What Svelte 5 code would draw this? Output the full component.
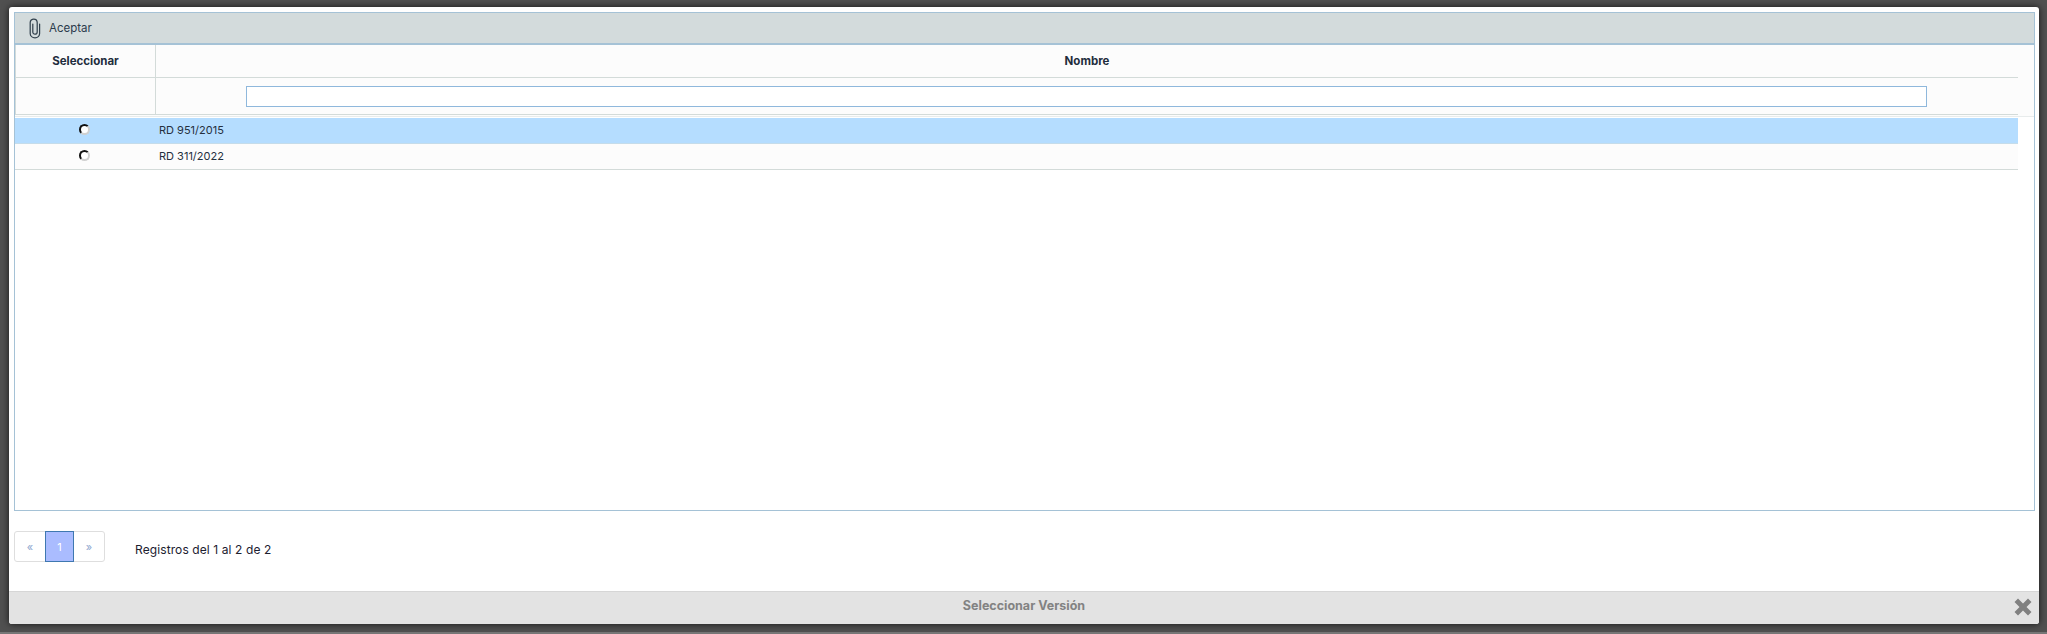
<script>
  const rows = [
    { name: 'RD 951/2015', selected: true },
    { name: 'RD 311/2022', selected: false }
  ];
</script>

<div class="screen">
  <div class="dialog">
    <div class="content">
      <div class="toolbar">
        <svg class="clip" width="12" height="21" viewBox="0 0 12 21" fill="none" stroke="#33424e" stroke-width="1.25" stroke-linecap="round">
          <path d="M10.6 6V15.5C10.6 18 8.6 19.8 6 19.8C3.4 19.8 1.2 18 1.2 15.5V4.6C1.2 2.5 2.8 1 4.8 1C6.8 1 8.2 2.5 8.2 4.6V14C8.2 15.3 7.2 16.2 6 16.2C4.8 16.2 3.8 15.3 3.8 14V6"/>
        </svg>
        <span>Aceptar</span>
      </div>
      <div class="grid">
        <div class="head">
          <div class="hrow titles">
            <div class="c1">Seleccionar</div>
            <div class="c2">Nombre</div>
          </div>
          <div class="hrow filters">
            <div class="c1"></div>
            <div class="c2"><input type="text" aria-label="Nombre" /></div>
          </div>
        </div>
        <div class="body">
          {#each rows as row}
            <div class="row" class:selected={row.selected}>
              <div class="c1"><span class="radio"></span></div>
              <div class="c2">{row.name}</div>
            </div>
          {/each}
        </div>
      </div>
      <div class="pager-line">
        <div class="pager">
          <span class="pg">«</span>
          <span class="pg active">1</span>
          <span class="pg">»</span>
        </div>
        <span class="info">Registros del 1 al 2 de 2</span>
      </div>
    </div>
    <div class="footer">
      <span>Seleccionar Versión</span>
      <svg class="close" width="18" height="18" viewBox="0 0 18 18" aria-hidden="true">
        <path d="M4 .5L9 5.5L14 .5L17.5 4L12.5 9L17.5 14L14 17.5L9 12.5L4 17.5L.5 14L5.5 9L.5 4Z" fill="#808080"/>
      </svg>
    </div>
  </div>
</div>

<style>
  :global(body) {
    margin: 0;
    background: #4a4a4a;
  }
  .screen {
    box-sizing: border-box;
    width: 2047px;
    height: 634px;
    padding: 7px 8px 10px 9px;
    background: #505050;
    border-bottom: 2px solid #767676;
    font-family: Inter, "Open Sans", sans-serif;
    color: #1b2a3a;
    overflow: hidden;
  }
  .dialog {
    height: 617px;
    background: #fff;
    border-radius: 3px;
    display: flex;
    flex-direction: column;
    overflow: hidden;
    box-shadow: 0 0 7px rgba(0, 0, 0, 0.75);
  }
  .content {
    flex: 1;
    padding: 5px 4px 0 5px;
    min-height: 0;
  }
  .toolbar {
    box-sizing: border-box;
    height: 33px;
    display: flex;
    align-items: center;
    gap: 8px;
    padding-left: 14px;
    background: #d3dbdc;
    border: 1px solid #a5c2d6;
    border-bottom-width: 2px;
    font-size: 11.5px;
    color: #2c3c4c;
  }
  .grid {
    box-sizing: border-box;
    height: 466px;
    border: 1px solid #a5c2d6;
    border-top: 0;
  }
  .head {
    background: #fcfcfc;
    border-bottom: 1px solid #e8ecec;
    height: 71px;
  }
  .hrow {
    display: flex;
    margin-right: 16px;
    border-bottom: 1px solid #d3dbd9;
    box-sizing: border-box;
  }
  .titles {
    height: 33px;
    font-weight: 700;
    font-size: 11.5px;
    text-align: center;
    color: #1f2d3d;
  }
  .filters {
    height: 37px;
  }
  .hrow .c1 {
    box-sizing: border-box;
    width: 141px;
    border-right: 1px solid #d3dbd9;
    border-left: 1px solid #d3dbd9;
    flex: none;
    line-height: 32px;
  }
  .hrow .c2 {
    flex: 1;
    line-height: 32px;
  }
  .filters .c2 {
    display: flex;
    justify-content: center;
    align-items: flex-start;
    padding-top: 8px;
    box-sizing: border-box;
  }
  input {
    box-sizing: border-box;
    display: block;
    width: 1681px;
    height: 21px;
    margin-right: 1px;
    padding: 0;
    background: #fff;
    border: 1px solid #8fb8dc;
    border-radius: 0;
    outline: none;
  }
  .body {
    margin-right: 16px;
    padding-top: 1px;
  }
  .row {
    display: flex;
    box-sizing: border-box;
    height: 26px;
    padding-bottom: 2px;
    background: #fcfcfc;
    border-bottom: 1px solid #d3dbd9;
    font-size: 11px;
    align-items: center;
    color: #25303e;
  }
  .row.selected {
    background: #b5ddff;
    border-bottom-color: #c5dcea;
  }
  .row .c1 {
    width: 139px;
    flex: none;
    display: flex;
    justify-content: center;
  }
  .row .c2 {
    padding-left: 5px;
  }
  .radio {
    box-sizing: border-box;
    display: block;
    width: 11px;
    height: 11px;
    border-radius: 50%;
    background: #fff;
    border: 2px solid;
    border-color: #111 #d0d0d0 #d0d0d0 #111;
  }
  .pager-line {
    display: flex;
    align-items: center;
    margin-top: 20px;
    height: 30px;
  }
  .pager {
    box-sizing: border-box;
    display: flex;
    width: 91px;
    height: 31px;
    border: 1px solid #dedede;
    border-radius: 3px;
    font-size: 11px;
    color: #8fa8d0;
    text-align: center;
  }
  .pg {
    flex: 1;
    line-height: 30px;
  }
  .pg.active {
    flex: none;
    box-sizing: border-box;
    width: 29px;
    height: 31px;
    margin-top: -1px;
    background: #aabcff;
    border: 1px solid #3f78b0;
    color: #fff;
  }
  .info {
    margin-left: 30px;
    margin-top: 6px;
    font-size: 12px;
    color: #1c2030;
    letter-spacing: 0.1px;
  }
  .footer {
    position: relative;
    box-sizing: border-box;
    height: 33px;
    flex: none;
    display: flex;
    align-items: center;
    justify-content: center;
    padding-bottom: 5px;
    background: #e3e3e3;
    border-top: 1px solid #d6d6d6;
    font-weight: 700;
    font-size: 12.5px;
    color: #828282;
  }
  .close {
    position: absolute;
    right: 7px;
    top: 6px;
  }
</style>
